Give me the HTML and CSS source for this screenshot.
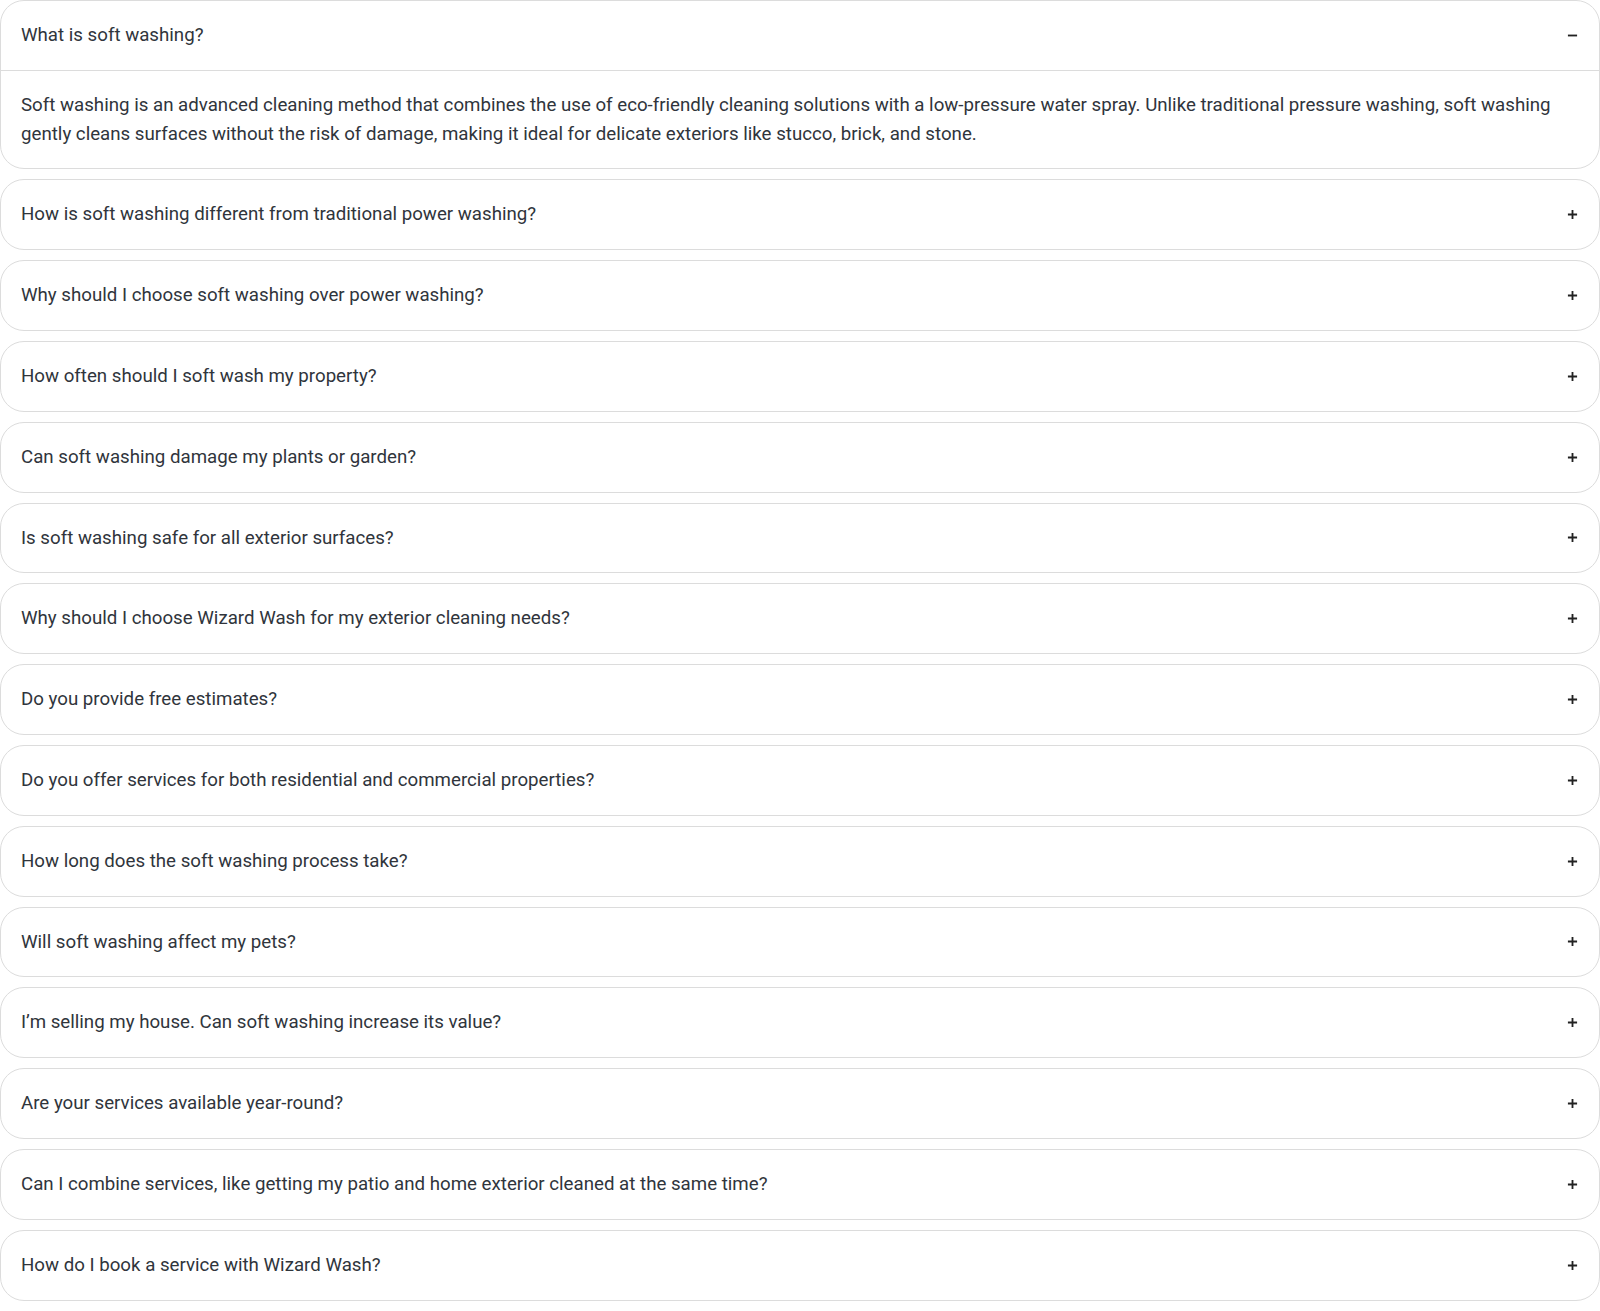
FILE: index.html
```html
<!DOCTYPE html>
<html lang="en">
<head>
    <meta charset="UTF-8">
    <meta name="viewport" content="width=device-width, initial-scale=1.0">
    <title>FAQ</title>
    <link rel="stylesheet" href="styles.css">
</head>
<body>
    <div class="faq-list">
        <div class="faq-item open">
            <div class="faq-question">
                <span>What is soft washing?</span>
                <svg class="faq-icon" viewBox="0 0 12 12"><path d="M1 6h10"/></svg>
            </div>
            <div class="faq-answer">
                Soft washing is an advanced cleaning method that combines the use of eco-friendly cleaning solutions with a low-pressure water spray. Unlike traditional pressure washing, soft washing gently cleans surfaces without the risk of damage, making it ideal for delicate exteriors like stucco, brick, and stone.
            </div>
        </div>
        <div class="faq-item">
            <div class="faq-question">
                <span>How is soft washing different from traditional power washing?</span>
                <svg class="faq-icon" viewBox="0 0 12 12"><path d="M1 6h10M6 1v10"/></svg>
            </div>
        </div>
        <div class="faq-item">
            <div class="faq-question">
                <span>Why should I choose soft washing over power washing?</span>
                <svg class="faq-icon" viewBox="0 0 12 12"><path d="M1 6h10M6 1v10"/></svg>
            </div>
        </div>
        <div class="faq-item">
            <div class="faq-question">
                <span>How often should I soft wash my property?</span>
                <svg class="faq-icon" viewBox="0 0 12 12"><path d="M1 6h10M6 1v10"/></svg>
            </div>
        </div>
        <div class="faq-item">
            <div class="faq-question">
                <span>Can soft washing damage my plants or garden?</span>
                <svg class="faq-icon" viewBox="0 0 12 12"><path d="M1 6h10M6 1v10"/></svg>
            </div>
        </div>
        <div class="faq-item">
            <div class="faq-question">
                <span>Is soft washing safe for all exterior surfaces?</span>
                <svg class="faq-icon" viewBox="0 0 12 12"><path d="M1 6h10M6 1v10"/></svg>
            </div>
        </div>
        <div class="faq-item">
            <div class="faq-question">
                <span>Why should I choose Wizard Wash for my exterior cleaning needs?</span>
                <svg class="faq-icon" viewBox="0 0 12 12"><path d="M1 6h10M6 1v10"/></svg>
            </div>
        </div>
        <div class="faq-item">
            <div class="faq-question">
                <span>Do you provide free estimates?</span>
                <svg class="faq-icon" viewBox="0 0 12 12"><path d="M1 6h10M6 1v10"/></svg>
            </div>
        </div>
        <div class="faq-item">
            <div class="faq-question">
                <span>Do you offer services for both residential and commercial properties?</span>
                <svg class="faq-icon" viewBox="0 0 12 12"><path d="M1 6h10M6 1v10"/></svg>
            </div>
        </div>
        <div class="faq-item">
            <div class="faq-question">
                <span>How long does the soft washing process take?</span>
                <svg class="faq-icon" viewBox="0 0 12 12"><path d="M1 6h10M6 1v10"/></svg>
            </div>
        </div>
        <div class="faq-item">
            <div class="faq-question">
                <span>Will soft washing affect my pets?</span>
                <svg class="faq-icon" viewBox="0 0 12 12"><path d="M1 6h10M6 1v10"/></svg>
            </div>
        </div>
        <div class="faq-item">
            <div class="faq-question">
                <span>I’m selling my house. Can soft washing increase its value?</span>
                <svg class="faq-icon" viewBox="0 0 12 12"><path d="M1 6h10M6 1v10"/></svg>
            </div>
        </div>
        <div class="faq-item">
            <div class="faq-question">
                <span>Are your services available year-round?</span>
                <svg class="faq-icon" viewBox="0 0 12 12"><path d="M1 6h10M6 1v10"/></svg>
            </div>
        </div>
        <div class="faq-item">
            <div class="faq-question">
                <span>Can I combine services, like getting my patio and home exterior cleaned at the same time?</span>
                <svg class="faq-icon" viewBox="0 0 12 12"><path d="M1 6h10M6 1v10"/></svg>
            </div>
        </div>
        <div class="faq-item">
            <div class="faq-question">
                <span>How do I book a service with Wizard Wash?</span>
                <svg class="faq-icon" viewBox="0 0 12 12"><path d="M1 6h10M6 1v10"/></svg>
            </div>
        </div>
    </div>
</body>
</html>
```
FILE: styles.css
```css
/* FAQ accordion */
body {
    margin: 0;
    background-color: #fff;
    font-family: Roboto, "Liberation Sans", sans-serif;
    font-size: 18.7px;
    line-height: 28.8px;
    color: #30353c;
}
.faq-list {
    display: flex;
    flex-direction: column;
    gap: 10px;
    padding-bottom: 10px;
}
.faq-item {
    border: 1px solid #dcdcdc;
    border-radius: 24px;
    background-color: #fff;
}
.faq-question {
    display: flex;
    justify-content: space-between;
    align-items: center;
    padding: 20px;
    cursor: pointer;
}
.faq-icon {
    width: 11px;
    height: 11px;
    fill: none;
    stroke: #222;
    stroke-width: 2;
    margin-right: 1px;
    flex-shrink: 0;
}
.faq-answer {
    border-top: 1px solid #dcdcdc;
    padding: 20px;
}
```
